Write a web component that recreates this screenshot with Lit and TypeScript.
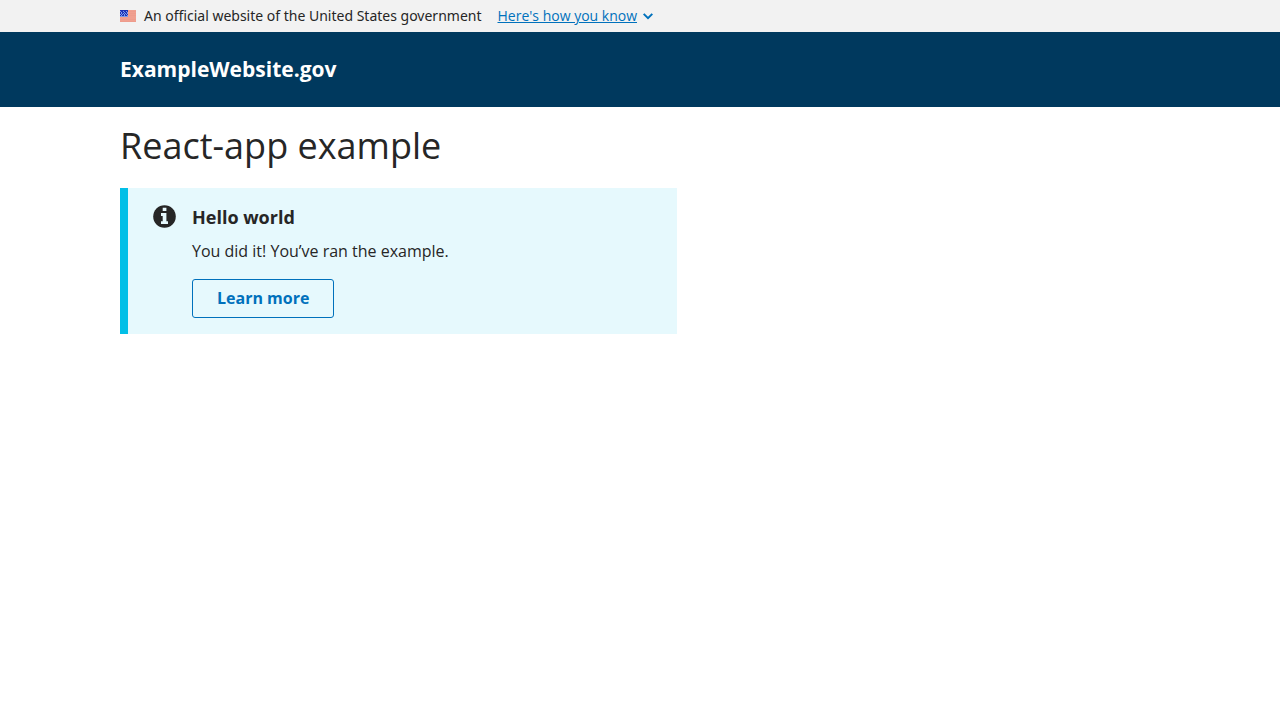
import { LitElement, html, css } from "lit";
import { customElement } from "lit/decorators.js";

@customElement("app-root")
export class AppRoot extends LitElement {
  static styles = css`
    :host {
      display: block;
      min-height: 100vh;
      background: #fff;
      color: #262626;
      font: 16px/24px "Open Sans", Helvetica, sans-serif;
    }
    .container {
      box-sizing: border-box;
      max-width: 1072px;
      margin: 0 auto;
      padding: 0 16px;
    }
    .banner {
      background: #f2f2f2;
      font-size: 14px;
    }
    .banner-row {
      display: flex;
      align-items: center;
      gap: 8px;
      padding-top: 4px;
      padding-bottom: 4px;
    }
    .flag {
      flex: none;
      width: 16px;
      height: 12px;
    }
    .banner p {
      margin: 0 8px 0 0;
      font-family: "Noto Sans", "Open Sans", sans-serif;
    }
    .banner-toggle {
      display: flex;
      align-items: center;
      gap: 6px;
      padding: 0;
      border: 0;
      background: none;
      color: #0071bc;
      font: inherit;
      cursor: pointer;
    }
    .banner-toggle span {
      text-decoration: underline;
    }
    .chevron {
      width: 10px;
      height: 7px;
    }
    .header {
      background: #00395e;
      color: #fff;
      font-size: 21px;
      font-weight: 700;
      line-height: 27px;
    }
    .header .container {
      padding-top: 24px;
      padding-bottom: 24px;
    }
    h1 {
      margin: 16px 0 20px;
      font-size: 36px;
      font-weight: 400;
      line-height: 45px;
    }
    .alert {
      box-sizing: border-box;
      display: flex;
      gap: 16px;
      max-width: 557px;
      padding: 16px 16px 16px 24px;
      border-left: 8px solid #02bfe7;
      background: #e6f9fd;
    }
    .alert-icon {
      flex: none;
      width: 24px;
      height: 24px;
    }
    h2 {
      margin: 0 0 8px;
      font-size: 18px;
      font-weight: 700;
      line-height: 27px;
    }
    .alert p {
      margin: 0 0 16px;
    }
    .button {
      display: block;
      padding: 8px 24px;
      border: 1px solid #0071bc;
      border-radius: 3px;
      background: transparent;
      color: #0071bc;
      font: inherit;
      font-weight: 700;
      line-height: 21px;
      cursor: pointer;
    }
  `;

  render() {
    return html`
      <section class="banner" aria-label="Official government website">
        <div class="container banner-row">
          <svg class="flag" viewBox="0 0 16 12" shape-rendering="crispEdges" aria-hidden="true">
            <path fill="#f0a090" d="M0 0h16v12H0z" />
            <path fill="#ee9c8c" d="M8 1h8v1H8zM8 3h8v1H8zM8 5h8v1H8zM0 9h16v1H0zM0 11h16v1H0z" />
            <path fill="#1d33b8" d="M0 0h8v7H0z" />
            <path fill="#7c9bea" d="M0 1h1v1H0zM3 1h1v1H3zM6 1h1v1H6zM1 2h1v1H1zM4 2h1v1H4zM7 2h1v1H7zM1 3h1v1H1zM3 3h1v1H3zM5 3h1v1H5zM7 3h1v1H7zM0 4h1v1H0zM2 4h1v1H2zM4 4h1v1H4zM6 4h1v1H6zM1 5h1v1H1zM4 5h1v1H4zM7 5h1v1H7zM0 6h8v1H0z" />
          </svg>
          <p>An official website of the United States government</p>
          <button class="banner-toggle" type="button" aria-expanded="false">
            <span>Here's how you know</span>
            <svg class="chevron" viewBox="0 0 10 7" fill="none" stroke="#0071bc" stroke-width="2" aria-hidden="true">
              <path d="M.7 .9 5 5.2 9.3 .9" />
            </svg>
          </button>
        </div>
      </section>
      <header class="header">
        <div class="container">ExampleWebsite.gov</div>
      </header>
      <main class="container">
        <h1>React-app example</h1>
        <section class="alert" aria-labelledby="alert-title">
          <svg class="alert-icon" viewBox="0 0 24 24" aria-hidden="true">
            <circle cx="12.5" cy="12.5" r="11.3" fill="#262626" />
            <path fill="#e6f9fd" d="M10.7 3.7h3.7v3.2h-3.7zM9 9h5.4v8.2H16V20H9v-2.8h1.7V12H9z" />
          </svg>
          <div>
            <h2 id="alert-title">Hello world</h2>
            <p>You did it! You’ve ran the example.</p>
            <button class="button" type="button">Learn more</button>
          </div>
        </section>
      </main>
    `;
  }
}
